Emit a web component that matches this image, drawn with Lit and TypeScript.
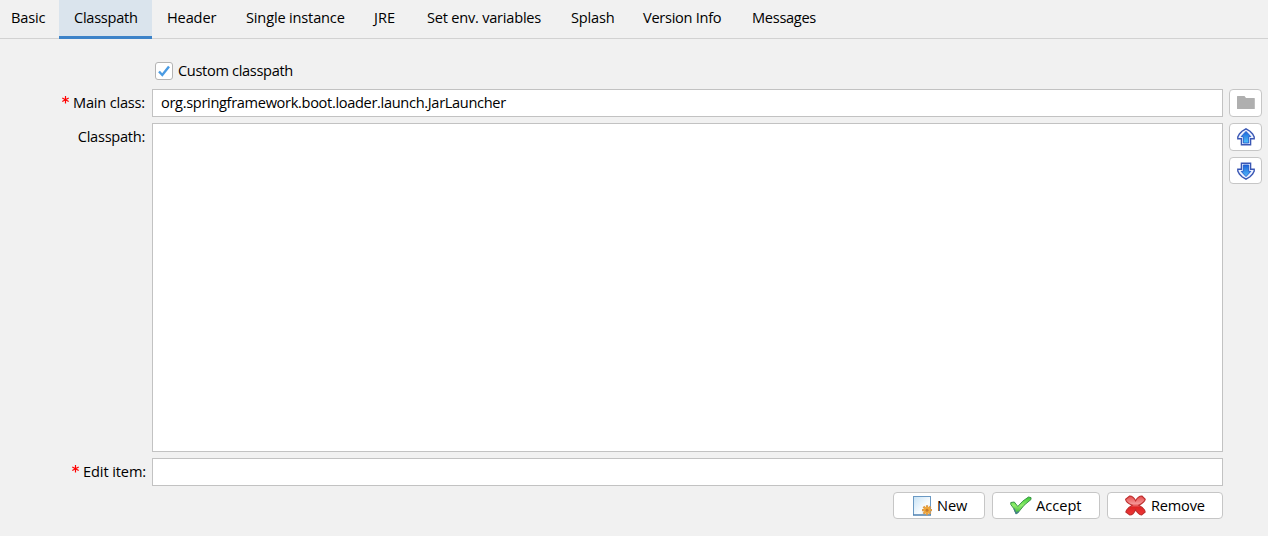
import { LitElement, html, css, svg } from "lit";
import { customElement, state } from "lit/decorators.js";

// Label, tab width and tracking
const TABS: Array<[string, number, number]> = [
  ["Basic", 63, -0.2], ["Classpath", 93, -0.27], ["Header", 79, -0.15], ["Single instance", 128, -0.17], ["JRE", 53, 0],
  ["Set env. variables", 144, -0.23], ["Splash", 72, -0.2], ["Version Info", 109, -0.28], ["Messages", 94, -0.3],
];

const folderIcon = html`<svg class="folder" width="18" height="15" viewBox="0 0 18 15">
  <path d="M0 .5Q0 0 .5 0H7.5L9 2H17.3Q17.8 2 17.8 2.5V12.5Q17.8 13 17.3 13H.5Q0 13 0 12.5Z" fill="#afafaf"/></svg>`;

const arrow = (down: boolean) => html`<svg class="arrow" width="18" height="18" viewBox="0 0 18 18">
  <defs><linearGradient id="g" x1="0" y1="0" x2="0" y2="1"><stop offset="0" stop-color="#1c64d8"/><stop offset="1" stop-color="#4fc4fa"/></linearGradient>
  <linearGradient id="h" x1="0" y1="1" x2="0" y2="0"><stop offset="0" stop-color="#1c64d8"/><stop offset="1" stop-color="#52b8f8"/></linearGradient></defs>
  ${svg`<g transform=${down ? "matrix(1 0 0 -1 0 18)" : ""}>
    <path d="M9 .8L13 3.2L15.6 6L17.2 9V10.8H13.6V16.8H4.4V10.8H.8V9L2.4 6L5 3.2Z" fill="#eef3ff" stroke="#3a57b4" stroke-width="1.4"/>
    <path d="M9 3.4L13.8 8.6H11.7V15H6.3V8.6H4.2Z" fill=${down ? "url(#h)" : "url(#g)"} stroke="#1d58cc" stroke-width=".9"/>
  </g>`}</svg>`;

const newIcon = html`<svg width="20" height="21" viewBox="0 0 20 21">
  <defs><linearGradient id="p" x1="0" y1="0" x2="1" y2="1"><stop offset="0" stop-color="#c7e2f5"/><stop offset=".6" stop-color="#f8fcff"/><stop offset="1" stop-color="#d5e9f8"/></linearGradient></defs>
  <rect x=".5" y="1.5" width="17" height="18.5" fill="url(#p)" stroke="#6a99c4"/>
  <path d="M0 20H18" stroke="#3f74a8"/>
  <g stroke="#dc9a48" stroke-width="2.2"><path d="M14 10.2V20.2M9 15.2H19M10.4 11.6L17.6 18.8M17.6 11.6L10.4 18.8"/></g>
  <circle cx="14" cy="15.2" r="3.4" fill="#f0a83c"/><circle cx="14" cy="15.2" r="1.5" fill="#c47a2e"/></svg>`;

const acceptIcon = html`<svg width="22" height="19" viewBox="0 0 22 19">
  <defs><linearGradient id="a" x1="0" y1="0" x2="0" y2="1"><stop offset="0" stop-color="#38c832"/><stop offset=".5" stop-color="#90ee6c"/><stop offset="1" stop-color="#35af35"/></linearGradient></defs>
  <path d="M.8 6.5L4.3 6L7.8 10.5Q12.5 4.5 18.5 1L21 1.6V3.5Q13.5 8.5 8.2 16.5L6 17.8Q3.8 11.5.8 8.5Z" fill="url(#a)" stroke="#399447" stroke-width="1"/>
  <path d="M4 12.5L6.2 17.6L8.7 15.5" fill="none" stroke="#467795" stroke-width="1.1"/></svg>`;

const removeIcon = html`<svg width="22" height="21" viewBox="0 0 22 21">
  <defs><linearGradient id="r" x1="0" y1="0" x2="0" y2="1"><stop offset="0" stop-color="#e64c4c"/><stop offset=".4" stop-color="#f49494"/><stop offset=".6" stop-color="#df2525"/><stop offset="1" stop-color="#ee3838"/></linearGradient></defs>
  <path d="M4.6 1Q8 .8 10.6 5.8Q13.4.8 17 1L20.2 4.3Q19.8 7 13.8 10.3Q19.8 13.5 20.2 17L16.6 20Q13.2 19.5 10.6 14.8Q8.3 20 4.8 20L.8 17Q1.6 13.5 7.2 10.3Q.8 7.5.6 4.3Z" fill="url(#r)" stroke="#bd2d2d" stroke-width="1.1"/></svg>`;

const star = html`<svg class="star" width="7" height="8" viewBox="0 0 7 8"><path d="M3.5 0V7.5M.3 1.9L6.7 5.6M6.7 1.9L.3 5.6" stroke="#f00" stroke-width="1.2"/></svg>`;

@customElement("app-root")
export class AppRoot extends LitElement {
  @state() private active = "Classpath";

  static styles = css`
    :host { display: block; width: 1268px; height: 536px; overflow: hidden; background: #f1f1f1; color: #000;
      font: 14.6px/20px "Open Sans", "Noto Sans", sans-serif; letter-spacing: -0.33px; }
    * { box-sizing: border-box; }
    .tabs { display: flex; height: 39px; border-bottom: 1px solid #d2d2d2; margin-left: -4px; }
    .tab { height: 39px; padding: 7px 0 0 15px; white-space: nowrap; flex: none; }
    .tab.active { background: #dae4ed; border-bottom: 3px solid #3c83c9; }
    .form { display: grid; grid-template-columns: 146px 1071px 33px; column-gap: 6px;
      grid-template-rows: 22px 28px 329px 28px 28px; row-gap: 6px; padding-top: 22px; }
    .check { grid-column: 2; display: flex; align-items: flex-start; padding-left: 3px; gap: 5px; height: 20px; }
    .check > span:last-child { margin-top: -1px; }
    .box { width: 18px; height: 18px; margin-top: 1px; border: 1px solid #b4b4b4; border-radius: 3px; background: #fff; display: block; }
    .label { display: flex; justify-content: flex-end; padding-top: 3px; white-space: nowrap; }
    .main { grid-column: 1; letter-spacing: -0.2px; padding-right: 1px; }
    .path { letter-spacing: -0.27px; padding-right: 1px; }
    .edit { letter-spacing: -0.12px; }
    .star { margin: 4px 4px 0 0; }
    .field { background: #fff; border: 1px solid #c2c2c2; padding: 2px 8px; }
    .side { display: flex; flex-direction: column; gap: 6px; }
    .btn { display: flex; align-items: center; background: #fff; border: 1px solid #c6c6c6; border-radius: 4px; height: 28px; flex: none; }
    .icon { justify-content: center; }
    .side .btn:last-child { height: 27px; }
    .actions { grid-column: 2; display: flex; justify-content: flex-end; gap: 7px; }
    .actions .btn { padding-left: 17px; gap: 4px; height: 27px; }
    .actions span { margin-top: -2px; }
    .actions .new { width: 92px; padding-left: 19px; letter-spacing: -0.1px; }
    .accept { width: 108px; letter-spacing: 0; }
    .remove { width: 116px; letter-spacing: -0.2px; }
  `;

  render() {
    return html`
      <div class="tabs">${TABS.map(([name, width, tracking]) => html`<div class="tab ${name === this.active ? "active" : ""}"
        style="width:${width}px;letter-spacing:${tracking}px" @click=${() => (this.active = name)}><span>${name}</span></div>`)}</div>
      <div class="form">
        <div class="check"><span class="box"><svg width="16" height="16" viewBox="0 0 16 16"><path d="M3 8.5L6.3 12L13 3.5" fill="none" stroke="#4a9be3" stroke-width="2.4"/></svg></span><span>Custom classpath</span></div>
        <div class="label main">${star}<span>Main class:</span></div>
        <div class="field"><span>org.springframework.boot.loader.launch.JarLauncher</span></div>
        <div class="btn icon">${folderIcon}</div>
        <div class="label path"><span>Classpath:</span></div>
        <div class="field"></div>
        <div class="side"><div class="btn icon">${arrow(false)}</div><div class="btn icon">${arrow(true)}</div></div>
        <div class="label edit">${star}<span>Edit item:</span></div>
        <div class="field"></div><span></span>
        <div class="actions">
          <div class="btn new">${newIcon}<span>New</span></div>
          <div class="btn accept">${acceptIcon}<span>Accept</span></div>
          <div class="btn remove">${removeIcon}<span>Remove</span></div>
        </div>
      </div>`;
  }
}
